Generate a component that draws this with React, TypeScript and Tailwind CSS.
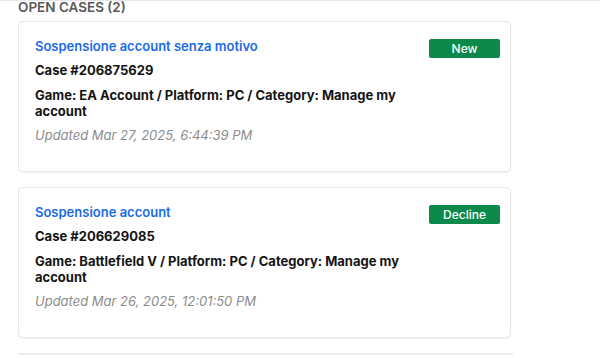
import React from 'react';

type Case = {
  title: string;
  number: string;
  details: string;
  updated: string;
  status: string;
};

const CASES: Case[] = [
  {
    title: 'Sospensione account senza motivo',
    number: '206875629',
    details: 'Game: EA Account / Platform: PC / Category: Manage my account',
    updated: 'Updated Mar 27, 2025, 6:44:39 PM',
    status: 'New',
  },
  {
    title: 'Sospensione account',
    number: '206629085',
    details: 'Game: Battlefield V / Platform: PC / Category: Manage my account',
    updated: 'Updated Mar 26, 2025, 12:01:50 PM',
    status: 'Decline',
  },
];

function CaseCard({ c }: { c: Case }) {
  return (
    <div className="flex w-[493px] rounded-[5px] border border-[#e6e6e6] bg-white pl-[16px] pr-[10px] pt-[16px] pb-[28px] shadow-[0_1px_2px_rgba(0,0,0,0.06)]">
      {/* Info */}
      <div className="flex-1 pr-[8px] text-[13px] leading-[16px]">
        <p className="font-semibold text-[#1a6be3]">{c.title}</p>
        <p className="mt-[8px] font-bold text-[#141414]">Case #{c.number}</p>
        <p className="mt-[9px] font-bold text-[#141414]">{c.details}</p>
        <p className="mt-[8px] italic text-[#8c8c8c]">{c.updated}</p>
      </div>
      {/* Status */}
      <div className="mt-[1px] flex h-[19px] w-[71px] shrink-0 items-center justify-center rounded-[2px] bg-[#0b8a4b] text-[12px] font-medium text-white">
        {c.status}
      </div>
    </div>
  );
}

export default function App() {
  return (
    <div
      className="h-[358px] w-[600px] overflow-hidden border-t border-[#e8e8e8] bg-white"
      style={{ fontFamily: 'Inter, "Liberation Sans", sans-serif' }}
    >
      <div className="pl-[18px]">
        <h2 className="-mt-[2px] text-[13.5px] font-semibold leading-[16px] text-[#5a5a5a]">
          OPEN CASES (2)
        </h2>
        <div className="mt-[6px] flex flex-col gap-[15px]">
          {CASES.map((c) => (
            <CaseCard key={c.number} c={c} />
          ))}
        </div>
        <div className="mt-[15px] h-[2px] w-[495px] bg-[#ececec]" />
      </div>
    </div>
  );
}
